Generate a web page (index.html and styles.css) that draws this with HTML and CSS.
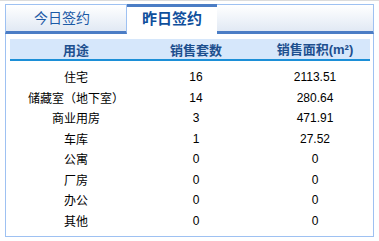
FILE: index.html
```html
<!DOCTYPE html>
<html>
<head>
<meta charset="utf-8">
<link rel="stylesheet" href="styles.css">
</head>
<body>
<div class="top-line"></div>
<div class="panel">
  <div class="tabs">
    <div class="tab">今日签约</div>
    <div class="tab active">昨日签约</div>
    <div class="tab-fill"></div>
  </div>
  <div class="content">
    <table class="stats">
      <thead>
        <tr><th class="c1">用途</th><th class="c2">销售套数</th><th class="c3">销售面积<span class="unit">(m²)</span></th></tr>
      </thead>
      <tbody>
        <tr><td class="c1">住宅</td><td class="c2">16</td><td class="c3">2113.51</td></tr>
        <tr><td class="c1">储藏室（地下室）</td><td class="c2">14</td><td class="c3">280.64</td></tr>
        <tr><td class="c1">商业用房</td><td class="c2">3</td><td class="c3">471.91</td></tr>
        <tr><td class="c1">车库</td><td class="c2">1</td><td class="c3">27.52</td></tr>
        <tr><td class="c1">公寓</td><td class="c2">0</td><td class="c3">0</td></tr>
        <tr><td class="c1">厂房</td><td class="c2">0</td><td class="c3">0</td></tr>
        <tr><td class="c1">办公</td><td class="c2">0</td><td class="c3">0</td></tr>
        <tr><td class="c1">其他</td><td class="c2">0</td><td class="c3">0</td></tr>
      </tbody>
    </table>
  </div>
</div>
<div class="bottom-line"></div>
</body>
</html>
```

FILE: styles.css
```css
html, body {
  margin: 0;
  padding: 0;
  background: #fff;
}
body {
  font-family: "Liberation Sans", "Noto Sans CJK SC", sans-serif;
  color: #000;
  width: 379px;
  height: 241px;
  overflow: hidden;
}
.top-line {
  height: 1px;
  background: #dcdcdc;
  margin-bottom: 3px;
}
.panel {
  margin-left: 5px;
  width: 369px;
}
.tabs {
  display: flex;
  height: 30px;
}
.tab, .tab-fill {
  box-sizing: border-box;
  height: 30px;
  border-top: 1px solid #9ec1f2;
  border-bottom: 3px solid #4b7dc5;
  background: linear-gradient(#ffffff, #e1e9f4);
}
.tab {
  width: 122px;
  border-left: 1px solid #9ec1f2;
  border-right: 1px solid #9ec1f2;
  font-family: "Noto Sans CJK SC", sans-serif;
  font-size: 14px;
  color: #1b5aa6;
  text-align: center;
  line-height: 24px;
  padding-right: 8px;
}
.tab.active {
  width: 90px;
  border: none;
  border-top: 3px solid #4b7dc5;
  background: #fff;
  font-weight: bold;
  font-size: 15px;
  color: #0f4f9c;
  line-height: 22px;
  padding-right: 0;
  padding-left: 0;
}
.tab-fill {
  flex: 1;
  border-right: 1px solid #9ec1f2;
}
.content {
  box-sizing: border-box;
  height: 203px;
  border-left: 1px solid #9ec1f2;
  border-right: 1px solid #9ec1f2;
  border-bottom: 1px solid #9ec1f2;
  padding: 5px 2px 0 4px;
}
.stats {
  border-collapse: collapse;
  width: 360px;
  table-layout: fixed;
}
.stats th {
  background: #d6e7fb;
  border-bottom: 2px solid #1c8fd7;
  height: 19px;
  padding: 0;
  font-family: "Noto Sans CJK SC", sans-serif;
  font-size: 13px;
  font-weight: bold;
  color: #1d4f8e;
  line-height: 19px;
}
.stats th .unit {
  font-family: "Liberation Sans", sans-serif;
  font-size: 13px;
}
.stats td {
  height: 20.5px;
  padding: 0;
  text-align: center;
  font-size: 12px;
  line-height: 20px;
}
.stats tbody tr:first-child td {
  padding-top: 6px;
}
.stats td.c1 {
  font-family: "Noto Sans CJK SC", sans-serif;
}
.c1 { width: 132px; }
.c2 { width: 108px; }
.c3 { width: 120px; padding-left: 10px !important; box-sizing: border-box; }
```
